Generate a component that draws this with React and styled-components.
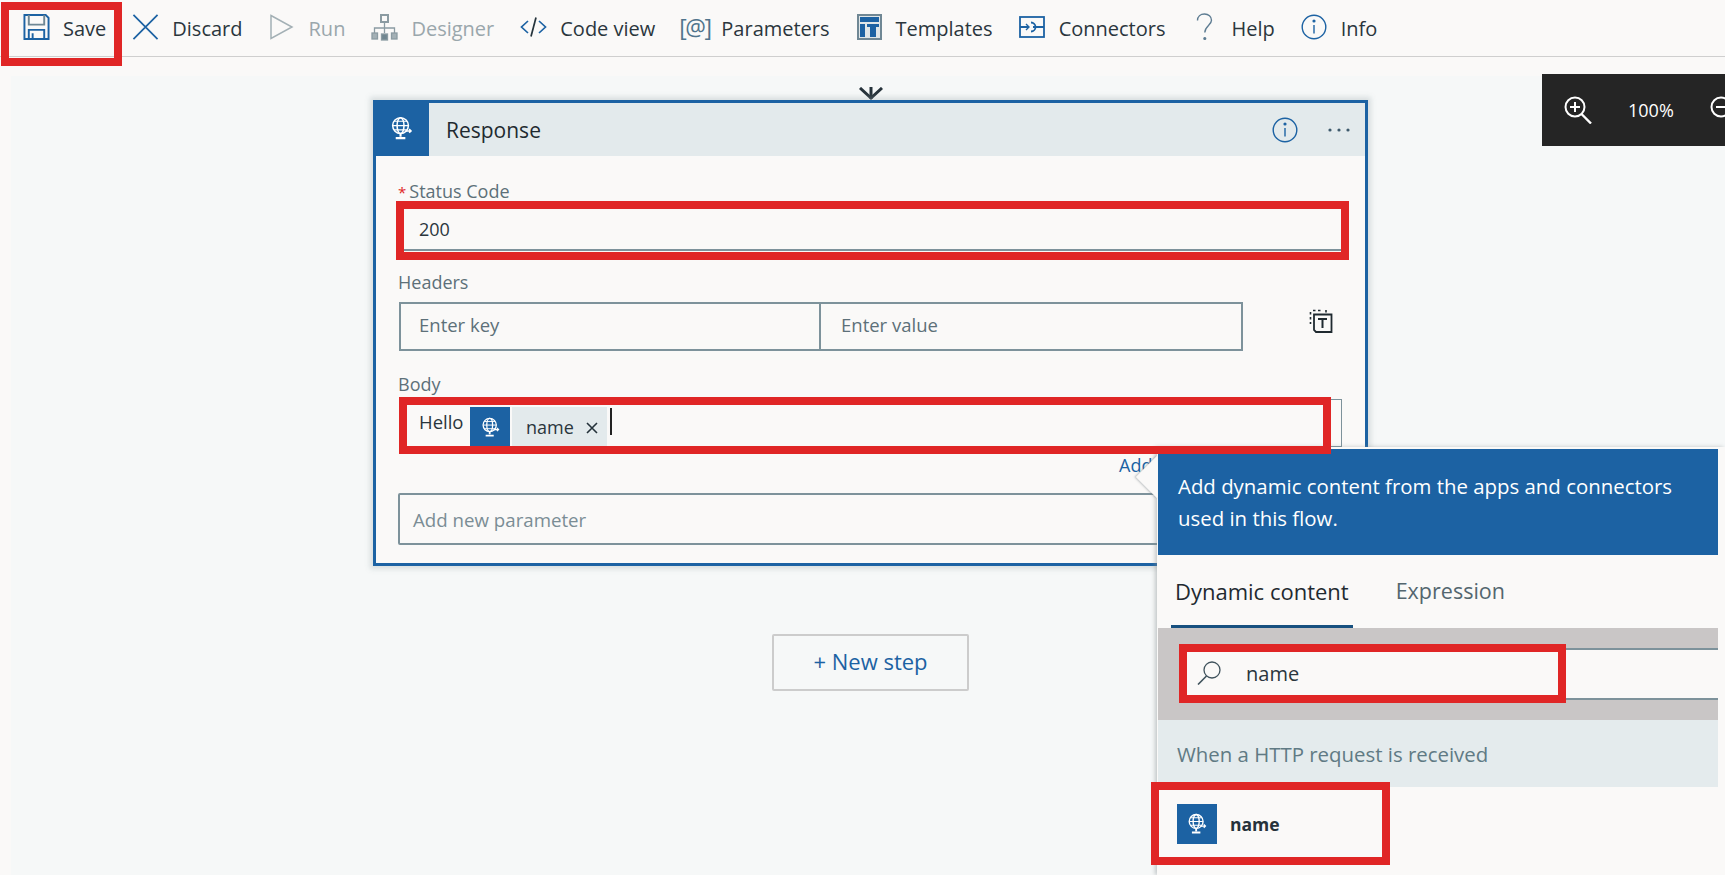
import React from "react";
import styled, { createGlobalStyle } from "styled-components";

const BLUE = "#1c62a3";
const PAPER = "#faf9f8";
const STEEL = "#7d929b";
const RED = "#e02626";

const GlobalStyle = createGlobalStyle`
  html, body { margin: 0; padding: 0; background: ${PAPER}; }
  body { font-family: "Open Sans", "Noto Sans", sans-serif; overflow: hidden; }
`;

const Page = styled.div`
  position: relative;
  width: 1725px;
  height: 875px;
  overflow: hidden;
  background: ${PAPER};
  color: #2a363d;
`;

// Toolbar
const Toolbar = styled.div`
  display: flex;
  align-items: center;
  gap: 26px;
  height: 57px;
  padding-left: 23px;
  box-sizing: border-box;
  border-bottom: 1px solid #cfcfcf;
`;

const ToolItem = styled.div`
  position: relative;
  display: flex;
  align-items: center;
  gap: 13px;
  height: 56px;
  padding-top: 1px;
  box-sizing: border-box;
  font-size: 20px;
  white-space: nowrap;
  color: ${(p) => (p.$disabled ? "#9aa7ac" : "#2a363d")};
`;

const ToolIcon = styled.span`
  display: flex;
  align-items: center;
  justify-content: center;
  flex: none;
  width: 27px;
  height: 28px;
  margin-top: -3px;
`;

const ParamGlyph = styled.span`
  font-size: 23px;
  letter-spacing: -1.5px;
  color: #50748c;
  white-space: nowrap;
`;

// Red annotation frames sit on top of the part they mark
const Highlight = styled.div`
  position: absolute;
  top: ${(p) => p.$top}px;
  right: ${(p) => p.$right}px;
  bottom: ${(p) => p.$bottom}px;
  left: ${(p) => p.$left}px;
  border: 8px solid ${RED};
  z-index: 5;
  pointer-events: none;
`;

// Canvas
const Canvas = styled.div`
  height: 799px;
  margin: 19px 0 0 11px;
  padding: 11px 0 0 362px;
  box-sizing: border-box;
  background: #f6f8f8;
`;

const Flow = styled.div`
  display: flex;
  flex-direction: column;
  align-items: center;
  width: 995px;
`;

const Connector = styled.svg`
  display: block;
  width: 26px;
  height: 13px;
`;

const Card = styled.div`
  width: 100%;
  height: 466px;
  box-sizing: border-box;
  border: 3px solid ${BLUE};
  background: ${PAPER};
  box-shadow: 0 0 5px 3px rgba(150, 165, 170, 0.3);
`;

const CardHeader = styled.div`
  display: flex;
  align-items: center;
  height: 53px;
  background: #e3eaec;
`;

const ActionIcon = styled.div`
  display: flex;
  align-items: center;
  justify-content: center;
  flex: none;
  width: ${(p) => p.$size}px;
  height: ${(p) => p.$height || p.$size}px;
  background: ${BLUE};
`;

const HeaderAction = styled(ActionIcon)`
  width: 56px;
  height: 56px;
  margin: -3px 0 0 -3px;
`;

const CardTitle = styled.div`
  flex: 1;
  margin-left: 17px;
  font-size: 21px;
  color: #1f2a30;
`;

const HeaderTool = styled.div`
  display: flex;
  align-items: center;
  margin-right: ${(p) => p.$gap}px;
`;

const CardBody = styled.div`
  padding: 24px 0 0 22px;
`;

const Label = styled.div`
  height: 24px;
  margin-top: ${(p) => p.$top || 0}px;
  font-size: 18px;
  line-height: 22px;
  color: #5d7079;
`;

const Required = styled.span`
  margin-right: 3px;
  font-size: 15px;
  color: ${RED};
`;

const StatusField = styled.div`
  position: relative;
  display: flex;
  align-items: center;
  width: 937px;
  height: 42px;
  margin: 5px 0 0 6px;
  padding-left: 15px;
  box-sizing: border-box;
  border-bottom: 2px solid ${STEEL};
  font-size: 18px;
`;

const KeyValueRow = styled.div`
  display: flex;
  align-items: flex-start;
  margin: 7px 0 0 1px;
`;

const KeyValueInput = styled.div`
  display: flex;
  align-items: center;
  width: 422px;
  height: 49px;
  padding: 0 0 5px ${(p) => (p.$joined ? 20 : 18)}px;
  box-sizing: border-box;
  border: 2px solid ${STEEL};
  border-left-width: ${(p) => (p.$joined ? 0 : 2)}px;
  font-size: 18.5px;
  color: #5d7079;
`;

const TemplateButton = styled.div`
  margin: 7px 0 0 66px;
  line-height: 0;
`;

const BodyField = styled.div`
  position: relative;
  display: flex;
  align-items: flex-start;
  width: 943px;
  height: 48px;
  margin: 2px 0 0 1px;
  padding: 7px 0 0 19px;
  box-sizing: border-box;
  border: 1px solid ${STEEL};
`;

const BodyText = styled.span`
  width: 51px;
  margin-top: 2px;
  font-size: 18.5px;
  line-height: 26px;
`;

const Token = styled.div`
  display: flex;
  align-items: center;
  width: 95px;
  height: 40px;
  margin-left: 2px;
  padding-left: 14px;
  box-sizing: border-box;
  background: #e3eaec;
  font-size: 18px;
`;

const TokenClose = styled.span`
  display: flex;
  margin: 2px 0 0 12px;
`;

const Caret = styled.span`
  width: 2px;
  height: 27px;
  margin: 1px 0 0 3px;
  background: #222;
`;

const AddLink = styled.div`
  height: 20px;
  margin: 8px 0 0 721px;
  font-size: 18px;
  line-height: 20px;
  color: ${BLUE};
  white-space: nowrap;
`;

const ParamField = styled.div`
  display: flex;
  align-items: center;
  width: 944px;
  height: 52px;
  margin-top: 18px;
  padding-left: 13px;
  box-sizing: border-box;
  border: 2px solid ${STEEL};
  border-radius: 2px;
  font-size: 18.7px;
  color: #7b8d95;
`;

const NewStep = styled.div`
  display: flex;
  align-items: center;
  justify-content: center;
  width: 197px;
  height: 57px;
  margin-top: 68px;
  padding-bottom: 3px;
  box-sizing: border-box;
  border: 2px solid #cccccc;
  border-radius: 2px;
  font-size: 22px;
  color: ${BLUE};
`;

// Zoom control
const ZoomPanel = styled.div`
  position: absolute;
  top: 74px;
  right: 0;
  display: flex;
  align-items: center;
  gap: 36px;
  width: 183px;
  height: 72px;
  padding-left: 22px;
  box-sizing: border-box;
  overflow: hidden;
  background: #252525;
  color: #ffffff;
  font-size: 18px;
  font-weight: 500;
`;

const ZoomGlyph = styled.svg`
  flex: none;
`;

// Dynamic content flyout
const Flyout = styled.div`
  position: absolute;
  top: 447px;
  left: 1157px;
  right: 0;
  bottom: 0;
  display: flex;
  flex-direction: column;
  padding: 2px 7px 0 1px;
  box-sizing: border-box;
  background: ${PAPER};
  box-shadow: -2px 0 4px rgba(130, 140, 145, 0.45);
`;

const FlyoutArrow = styled.div`
  position: absolute;
  top: 15px;
  left: -15px;
  width: 30px;
  height: 30px;
  background: ${PAPER};
  box-shadow: -1px 1px 2px rgba(130, 140, 145, 0.5);
  transform: rotate(45deg);
`;

const FlyoutBanner = styled.div`
  position: relative;
  height: 106px;
  flex: none;
  padding: 21px 0 0 20px;
  box-sizing: border-box;
  background: ${BLUE};
  color: #ffffff;
  font-size: 20.4px;
  font-weight: 500;
  line-height: 32px;
  white-space: nowrap;
`;

const Tabs = styled.div`
  display: flex;
  align-items: flex-end;
  gap: 39px;
  height: 73px;
  flex: none;
  padding-left: 13px;
`;

const Tab = styled.div`
  height: 50px;
  padding: 0 4px;
  box-sizing: border-box;
  border-bottom: 3px solid ${(p) => (p.$active ? "#17507f" : "transparent")};
  font-size: ${(p) => (p.$active ? 22 : 21.5)}px;
  font-weight: ${(p) => (p.$active ? 500 : 400)};
  line-height: 26px;
  color: ${(p) => (p.$active ? "#1f2a30" : "#53666f")};
`;

const SearchBand = styled.div`
  height: 92px;
  flex: none;
  padding: 20px 0 0 22px;
  box-sizing: border-box;
  background: #c9c6c6;
`;

const SearchField = styled.div`
  position: relative;
  display: flex;
  align-items: center;
  height: 52px;
  padding: 0 0 2px 17px;
  box-sizing: border-box;
  border-top: 2px solid ${STEEL};
  border-bottom: 2px solid ${STEEL};
  background: ${PAPER};
  font-size: 20px;
`;

const SearchText = styled.span`
  margin-left: 25px;
`;

const GroupHeader = styled.div`
  display: flex;
  align-items: center;
  height: 67px;
  flex: none;
  padding: 1px 0 0 19px;
  box-sizing: border-box;
  background: #e4ebed;
  font-size: 20.4px;
  color: #607a84;
`;

const ResultRow = styled.div`
  position: relative;
  display: flex;
  align-items: center;
  width: 224px;
  height: 70px;
  padding: 3px 0 0 19px;
  box-sizing: border-box;
`;

const ResultName = styled.span`
  margin-left: 13px;
  font-size: 17.5px;
  font-weight: 700;
  color: #26323a;
`;

// Icons
const GlobeGlyph = ({ size = 26 }) => (
  <svg width={size} height={size} viewBox="0 0 26 26" fill="none" stroke="#fff" strokeWidth="1.6">
    <circle cx="12" cy="10" r="8.2" />
    <ellipse cx="12" cy="10" rx="3.6" ry="8.2" />
    <path d="M4 10h16M5.5 5.5h13M5.5 14.5h13" strokeWidth="1.2" />
    <path d="M12 18.2v3.3M7 23h10" strokeWidth="2.2" />
    <path d="M17 15.5h6m-2-2 2 2-2 2" strokeWidth="1.5" />
  </svg>
);

const SaveIcon = () => (
  <svg width="28" height="28" viewBox="0 0 28 28" fill="none" stroke={BLUE} strokeWidth="2">
    <path d="M1.5 1.5h22l3 3v22h-25z" />
    <path d="M6 1.5v10h16v-10" stroke="#6f8794" />
    <path d="M6 26v-9h16v9M10 20.5v5.5" />
  </svg>
);

const DiscardIcon = () => (
  <svg width="28" height="28" viewBox="0 0 28 28" stroke={BLUE} strokeWidth="1.8">
    <path d="M1.5 1.5l25 25M26.5 1.5l-25 25" />
  </svg>
);

const RunIcon = () => (
  <svg width="26" height="28" viewBox="0 0 26 28" fill="none" stroke="#a3b0b5" strokeWidth="1.5">
    <path d="M2 2.5l21 11.5L2 25.5z" />
  </svg>
);

const DesignerIcon = () => (
  <svg width="27" height="27" viewBox="0 0 27 27" fill="none" stroke="#8b9ba2" strokeWidth="1.3">
    <rect x="10" y="1" width="7" height="7" strokeWidth="2" />
    <path d="M13.5 8v11M3.5 19v-5h20v5" />
    <rect x="1" y="19" width="5.5" height="6" fill="#a3b0b5" />
    <rect x="10.5" y="20" width="6" height="6" fill="#708690" />
    <rect x="20.5" y="19" width="5.5" height="6" fill="#a3b0b5" />
  </svg>
);

const CodeIcon = () => (
  <svg width="27" height="22" viewBox="0 0 27 22" fill="none" stroke={BLUE} strokeWidth="1.7">
    <path d="M8 5l-6.5 6L8 17M19 5l6.5 6L19 17" />
    <path d="M16 1.5l-5 19" stroke="#25343c" />
  </svg>
);

const TemplatesIcon = () => (
  <svg width="25" height="26" viewBox="0 0 25 26">
    <rect x="1" y="1" width="23" height="24" fill="#dfe6e8" stroke="#6f8794" strokeWidth="2" />
    <path d="M3 3h19v5H3zM3 10h5v13H3zM10 10h12v3H10zM13 13h6v10h-6z" fill={BLUE} />
  </svg>
);

const ConnectorsIcon = () => (
  <svg width="26" height="22" viewBox="0 0 26 22" fill="none" stroke={BLUE} strokeWidth="1.8">
    <rect x="1" y="1" width="24" height="20" />
    <path d="M1 11h9M14 11h11" />
    <path d="M12 6.5a4.5 4.5 0 0 1 0 9" />
    <path d="M7 8l3 3-3 3" strokeWidth="1.4" />
  </svg>
);

const HelpIcon = () => (
  <svg width="17" height="28" viewBox="0 0 17 28" fill="none" stroke="#5d7c92" strokeWidth="1.4">
    <path d="M1.5 7.5C1.5 3.5 4.5 1 8.5 1s7 2.6 7 6.2c0 5-6.7 5.7-6.7 12.3" />
    <circle cx="8.8" cy="25.5" r="0.9" fill="#5d7c92" />
  </svg>
);

const InfoIcon = ({ size = 26 }) => (
  <svg width={size} height={size} viewBox="0 0 26 26" fill="none" stroke={BLUE} strokeWidth="1.4">
    <circle cx="13" cy="13" r="11.8" />
    <path d="M13 11v8.5" />
    <circle cx="13" cy="7" r="0.9" fill={BLUE} />
  </svg>
);

const DotsIcon = () => (
  <svg width="22" height="4" viewBox="0 0 22 4" fill="#3e5a6c">
    <circle cx="2" cy="2" r="1.6" />
    <circle cx="11" cy="2" r="1.6" />
    <circle cx="20" cy="2" r="1.6" />
  </svg>
);

const PasteTextIcon = () => (
  <svg width="24" height="24" viewBox="0 0 24 24" fill="none" stroke="#1f2a30" strokeWidth="1.6">
    <path d="M1.5 3v12M4 1.5h8M17 1v3" strokeDasharray="2.5 2.5" />
    <path d="M5 5.5h17.5v17.5H7l-2-2z" strokeWidth="1.8" />
    <path d="M9 10h9M13.5 10v9" strokeWidth="2" />
  </svg>
);

const CloseGlyph = () => (
  <svg width="12" height="12" viewBox="0 0 12 12" stroke="#25323a" strokeWidth="1.6">
    <path d="M1 1l10 10M11 1L1 11" />
  </svg>
);

const SearchGlyph = () => (
  <svg width="24" height="24" viewBox="0 0 24 24" fill="none" stroke="#3f525c" strokeWidth="1.3">
    <circle cx="15" cy="9" r="8" />
    <path d="M9.5 15L1 23.5" strokeWidth="1.6" />
  </svg>
);

const tools = [
  { label: "Discard", icon: <DiscardIcon /> },
  { label: "Run", icon: <RunIcon />, disabled: true },
  { label: "Designer", icon: <DesignerIcon />, disabled: true },
  { label: "Code view", icon: <CodeIcon /> },
  { label: "Parameters", icon: <ParamGlyph>[@]</ParamGlyph> },
  { label: "Templates", icon: <TemplatesIcon /> },
  { label: "Connectors", icon: <ConnectorsIcon /> },
  { label: "Help", icon: <HelpIcon /> },
  { label: "Info", icon: <InfoIcon /> },
];

const App = () => {
  return (
    <Page>
      <GlobalStyle />
      <Toolbar>
        <ToolItem>
          <ToolIcon>
            <SaveIcon />
          </ToolIcon>
          Save
          <Highlight $top={2} $left={-22} $right={-16} $bottom={-10} />
        </ToolItem>
        {tools.map((tool) => (
          <ToolItem key={tool.label} $disabled={tool.disabled}>
            <ToolIcon>{tool.icon}</ToolIcon>
            {tool.label}
          </ToolItem>
        ))}
      </Toolbar>

      <Canvas>
        <Flow>
          <Connector viewBox="0 0 26 13">
            <path d="M2 1l11 10L24 1" fill="none" stroke="#26323a" strokeWidth="3" />
            <path d="M13 0v12" stroke="#26323a" strokeWidth="3" />
          </Connector>
          <Card>
            <CardHeader>
              <HeaderAction>
                <GlobeGlyph size={25} />
              </HeaderAction>
              <CardTitle>Response</CardTitle>
              <HeaderTool $gap={30}>
                <InfoIcon />
              </HeaderTool>
              <HeaderTool $gap={15}>
                <DotsIcon />
              </HeaderTool>
            </CardHeader>
            <CardBody>
              <Label>
                <Required>*</Required>Status Code
              </Label>
              <StatusField>
                200
                <Highlight $top={-8} $left={-8} $right={-8} $bottom={-11} />
              </StatusField>
              <Label $top={20}>Headers</Label>
              <KeyValueRow>
                <KeyValueInput>Enter key</KeyValueInput>
                <KeyValueInput $joined>Enter value</KeyValueInput>
                <TemplateButton>
                  <PasteTextIcon />
                </TemplateButton>
              </KeyValueRow>
              <Label $top={22}>Body</Label>
              <BodyField>
                <BodyText>Hello</BodyText>
                <ActionIcon $size={40}>
                  <GlobeGlyph size={21} />
                </ActionIcon>
                <Token>
                  name
                  <TokenClose>
                    <CloseGlyph />
                  </TokenClose>
                </Token>
                <Caret />
                <Highlight $top={-3} $left={-1} $right={10} $bottom={-8} />
              </BodyField>
              <AddLink>Add</AddLink>
              <ParamField>Add new parameter</ParamField>
            </CardBody>
          </Card>
          <NewStep>+ New step</NewStep>
        </Flow>
      </Canvas>

      <ZoomPanel>
        <ZoomGlyph width="28" height="28" viewBox="0 0 28 28" fill="none" stroke="#fff" strokeWidth="2">
          <circle cx="11" cy="11" r="9.5" />
          <path d="M6 11h10M11 6v10" />
          <path d="M17.5 18l9.5 9.5" strokeWidth="2.4" />
        </ZoomGlyph>
        <span>100%</span>
        <ZoomGlyph width="28" height="28" viewBox="0 0 28 28" fill="none" stroke="#fff" strokeWidth="2">
          <circle cx="11" cy="11" r="9.5" />
          <path d="M6 11h10" />
        </ZoomGlyph>
      </ZoomPanel>

      <Flyout>
        <FlyoutArrow />
        <FlyoutBanner>
          Add dynamic content from the apps and connectors
          <br />
          used in this flow.
        </FlyoutBanner>
        <Tabs>
          <Tab $active>Dynamic content</Tab>
          <Tab>Expression</Tab>
        </Tabs>
        <SearchBand>
          <SearchField>
            <SearchGlyph />
            <SearchText>name</SearchText>
            <Highlight $top={-6} $left={-1} $right={152} $bottom={-5} />
          </SearchField>
        </SearchBand>
        <GroupHeader>When a HTTP request is received</GroupHeader>
        <ResultRow>
          <ActionIcon $size={40}>
            <GlobeGlyph size={22} />
          </ActionIcon>
          <ResultName>name</ResultName>
          <Highlight $top={-5} $left={-7} $right={-8} $bottom={-8} />
        </ResultRow>
      </Flyout>
    </Page>
  );
};

export default App;
